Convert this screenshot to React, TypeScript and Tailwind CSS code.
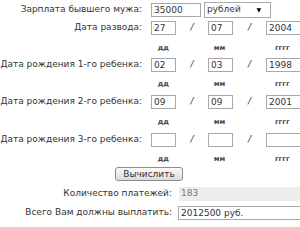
import React from "react"

const font = "font-['DejaVu_Sans',Verdana,sans-serif]"
const boxCls = "h-[14px] border border-[#a9a9a9] bg-white px-[2px] text-[9px] leading-[12px] text-[#333] outline-none"

function Label({ text }: { text: string }) {
  return <span className="w-[142px] shrink-0 text-right whitespace-nowrap">{text}</span>
}

function DateRow({ label, d, m, y, className }: { label: string; d: string; m: string; y: string; className: string }) {
  return (
    <div className={`flex items-center gap-[9px] ${className}`}>
      <Label text={label} />
      <div className="flex items-center">
        <input className={`${boxCls} w-[25px]`} defaultValue={d} />
        <span className="w-[32px] text-center italic">/</span>
        <input className={`${boxCls} w-[25px]`} defaultValue={m} />
        <span className="w-[33px] text-center italic">/</span>
        <input className={`${boxCls} w-[40px]`} defaultValue={y} />
      </div>
    </div>
  )
}

function Hints({ className }: { className: string }) {
  return (
    <div className={`flex h-[10px] items-center pl-[151px] text-[7px] font-bold text-[#444] ${className}`}>
      <span className="w-[25px] text-center">дд</span>
      <span className="w-[32px]" />
      <span className="w-[25px] text-center">мм</span>
      <span className="w-[33px]" />
      <span className="w-[36px] text-center">гггг</span>
    </div>
  )
}

export default function App() {
  return (
    <div className={`${font} h-[227px] w-[300px] overflow-hidden bg-white text-[9px] text-[#333]`}>
      {/* Salary */}
      <div className="mt-[1px] flex h-[17px] items-center gap-[9px]">
        <Label text="Зарплата бывшего мужа:" />
        <div className="flex items-center gap-[3px]">
          <input className={`${boxCls} w-[50px]`} defaultValue="35000" />
          <div className="flex h-[16px] w-[67px] items-center border border-[#a9a9a9] pl-[2px] text-[9px]">
            <span className="flex-1">рублей</span>
            <span className="mr-[9px] text-[6px] text-black">▼</span>
          </div>
        </div>
      </div>

      <DateRow label="Дата развода:" d="27" m="07" y="2004" className="mt-[3px] h-[14px]" />
      <Hints className="mt-[8px]" />
      <DateRow label="Дата рождения 1-го ребенка:" d="02" m="03" y="1998" className="mt-[5px] h-[14px]" />
      <Hints className="mt-[7px]" />
      <DateRow label="Дата рождения 2-го ребенка:" d="09" m="09" y="2001" className="mt-[6px] h-[14px]" />
      <Hints className="mt-[8px]" />
      <DateRow label="Дата рождения 3-го ребенка:" d="" m="" y="" className="mt-[5px] h-[16px]" />
      <Hints className="mt-[6px]" />

      <div className="mt-[3px] flex pl-[115px]">
        <button className="h-[14px] w-[68px] rounded-[3px] border border-[#8c8c8c] bg-gradient-to-b from-[#fbfbfb] to-[#dcdcdc] text-[9px] leading-[12px] text-[#333]">
          Вычислить
        </button>
      </div>

      <div className="mt-[6px] flex h-[14px] items-center gap-[7px]">
        <span className="w-[172px] shrink-0 text-right">Количество платежей:</span>
        <span className="flex h-[14px] flex-1 items-center bg-[#ededed] px-[2px] text-[#777]">183</span>
      </div>

      <div className="mt-[5px] flex h-[14px] items-center gap-[6px]">
        <span className="w-[172px] shrink-0 text-right">Всего Вам должны выплатить:</span>
        <input className={`${boxCls} flex-1`} defaultValue="2012500 руб." />
      </div>
    </div>
  )
}
